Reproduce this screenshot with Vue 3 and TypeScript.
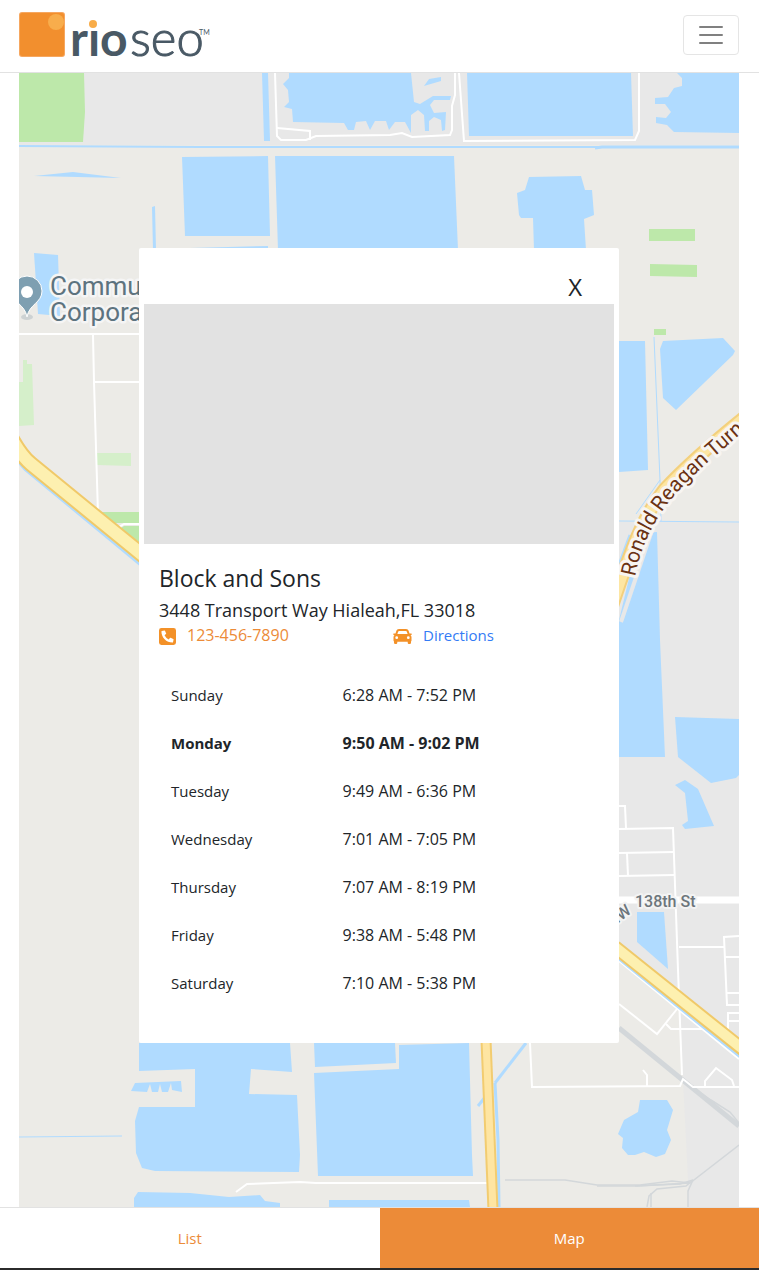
<script setup lang="ts">
import { ref } from 'vue'

interface DayHours {
  day: string
  hours: string
  today?: boolean
}

const view = ref<'list' | 'map'>('map')
const open = ref(true)

const week: DayHours[] = [
  { day: 'Sunday', hours: '6:28 AM - 7:52 PM' },
  { day: 'Monday', hours: '9:50 AM - 9:02 PM', today: true },
  { day: 'Tuesday', hours: '9:49 AM - 6:36 PM' },
  { day: 'Wednesday', hours: '7:01 AM - 7:05 PM' },
  { day: 'Thursday', hours: '7:07 AM - 8:19 PM' },
  { day: 'Friday', hours: '9:38 AM - 5:48 PM' },
  { day: 'Saturday', hours: '7:10 AM - 5:38 PM' },
]

const parks: string[] = [
  '19,73 84,73 85,112 83,142 19,142',
  '649,229 695,229 695,241 649,241',
  '650,264 697,265 697,277 650,276',
  '654,329 666,329 666,335 654,335',
  '98,512 139,512 139,523 104,523',
  '118,530 124,526 139,526 139,550',
]

const lawns: string[] = [
  '19,382 23,382 23,360 27,360 27,364 32,364 34,425 19,426',
  '97,453 131,453 131,466 97,465',
]

const lakes: string[] = [
  '262,73 268,73 270,141 264,141',
  '289,73 411,73 414,102 420,104 433,96 451,96 450,100 434,100 430,105 434,113 446,112 445,130 442,131 441,120 434,117 429,121 429,131 425,131 424,115 418,110 411,115 411,133 405,122 395,122 389,130 386,121 375,121 370,130 366,121 356,122 354,130 348,130 344,123 293,122 292,109 284,107 289,102 288,90 283,84 289,78',
  '424,86 429,79 441,77 441,81',
  '467,73 631,73 633,136 469,136',
  '677,73 739,73 739,133 674,132 667,125 656,123 656,117 666,118 671,112 665,104 655,104 655,98 668,97 674,88 682,86 682,78',
  '182,157 268,156 270,236 185,236',
  '275,156 454,156 458,250 278,250',
  '34,176 73,172 121,178',
  '152,207 155,206 156,250 153,250',
  '34,253 58,255 60,316 38,314',
  '529,177 581,176 585,190 592,190 594,215 584,219 586,250 534,250 533,218 521,218 519,215 517,193 525,190',
  '190,248 268,246 268,250 190,250',
  '619,341 645,341 648,470 619,472',
  '663,341 723,338 735,351 733,355 676,410 663,398 660,349',
  '640,533 657,532 660,640 665,757 619,757 619,620',
  '675,717 739,719 739,775 736,778 711,783 678,757',
  '675,785 685,780 698,789 714,826 685,829 682,825 688,821 685,793',
  '637,912 664,912 668,969 637,942',
  '139,1043 290,1043 292,1072 251,1069 249,1094 297,1095 300,1155 299,1172 155,1171 142,1168 136,1153 135,1121 139,1107 195,1107 195,1069 139,1071',
  '135,1083 181,1081 182,1092 172,1090 171,1083 168,1092 162,1092 160,1084 158,1092 152,1092 150,1084 147,1092 131,1091',
  '314,1043 395,1043 396,1063 315,1067',
  '399,1045 469,1043 472,1155 473,1176 318,1176 314,1073 399,1069',
  '134,1198 138,1192 190,1193 229,1197 260,1195 265,1201 280,1203 280,1207 134,1207',
  '329,1200 469,1200 470,1207 329,1207',
  '640,1100 667,1100 673,1110 667,1130 671,1140 665,1154 656,1157 644,1152 635,1155 628,1155 622,1148 623,1138 618,1134 624,1120 638,1112',
]

const canals: string[] = [
  'M495 1083 L498 1140 L499 1207',
  'M526 1043 L495 1083',
  'M478 1106 L486 1096',
]

const streets: string[] = [
  'M275 73 L277 136 L281 140 H306 L316 136 L390 135 L402 133 L412 137 L450 135 L452 130 L452 106 L455 95 V73',
  'M277 128 L310 131 V140',
  'M459 73 L464 141 L635 140 L639 131 V73',
  'M19 334 H139',
  'M93 335 L94 382 L98 514',
  'M94 382 H139',
  'M104 517 L119 527 L124 524 H139',
  'M47 470 L56 476 L62 484',
  'M619 806 H625 L626 828',
  'M619 829 L673 828 L678 970 L682 1075',
  'M619 853 L674 852',
  'M627 853 L628 876',
  'M619 876 L675 875',
  'M679 947 H724',
  'M739 936 L724 937 L727 1005 H739',
  'M725 957 H739',
  'M727 993 H739',
  'M739 1013 H728 V1030',
  'M728 1021 H739',
  'M619 1004 L657 1034 L677 1009',
  'M666 1024 L671 1029 H703',
  'M619 961 L739 1059',
  'M530 1043 L532 1087 L680 1086 L683 1079 L693 1087 H739',
  'M643 1070 L647 1075 V1086',
  'M705 1086 V1081 L716 1068 L732 1080 L734 1086',
  'M236 1192 L247 1184 L300 1182 L316 1183 H487',
]

const rails: string[] = [
  'M505 1180 H565 L597 1185 H640 L672 1181 L690 1183 L739 1145',
  'M597 1186 H636 L690 1183',
  'M635 1186 L680 1184 L693 1180',
  'M647 1207 L649 1196 L657 1189 L686 1186 L693 1180 L688 1191 V1207',
  'M651 1207 V1193',
  'M683 1081 L711 1100 L730 1112 L739 1123',
]
</script>

<template>
  <div class="page">
    <header class="topbar">
      <a class="brand" href="#" aria-label="Rio SEO home">
        <svg class="logo" viewBox="0 0 200 64" role="img" aria-label="rio seo">
          <rect x="0" y="9" width="46" height="45" rx="3" fill="#f6a760" />
          <rect x="1" y="10" width="44" height="43" rx="2" fill="#f28f2e" />
          <circle cx="37" cy="19" r="8" fill="#f8ad4c" />
          <text class="logo-bold" x="51" y="53">rio</text>
          <circle cx="75" cy="21" r="5" fill="#fff" />
          <circle cx="74" cy="21" r="4" fill="#f8ac48" />
          <text class="logo-light" x="111" y="53">seo</text>
          <text class="logo-mark" x="180" y="32">TM</text>
        </svg>
      </a>
      <button class="menu" type="button" aria-label="Toggle navigation">
        <svg viewBox="0 0 30 30" aria-hidden="true">
          <path d="M4 7h22M4 15h22M4 23h22" stroke="#808080" stroke-width="2" stroke-linecap="round" />
        </svg>
      </button>
    </header>

    <main class="stage">
      <svg class="map" viewBox="19 73 720 1134" preserveAspectRatio="xMidYMin slice" role="img" aria-label="Map">
        <rect x="19" y="73" width="720" height="1134" fill="#ecebe7" />
        <rect x="19" y="73" width="720" height="72" fill="#e8e8e8" />
        <polygon points="619,522 739,522 739,1207 688,1207 688,1180 683,1080 679,1010 619,961" fill="#e8e8e8" />
        <polygon v-for="p in parks" :key="p" :points="p" fill="#bde8aa" />
        <polygon v-for="p in lawns" :key="p" :points="p" fill="#d5efca" />
        <g fill="#b0dbff">
          <polygon v-for="p in lakes" :key="p" :points="p" />
        </g>
        <g fill="none" stroke="#b0dbff">
          <path d="M19 146 L200 147 H600" stroke-width="2" />
          <path d="M595 148 L602 147 H739" stroke-width="3" />
          <path d="M19 1137 L122 1136" stroke-width="1" />
          <path d="M654 337 L660 480 L636 514 M619 521 L739 522 M660 480 L661 521" stroke-width="1" />
          <path d="M630 535 L619 565" stroke-width="3" />
          <path v-for="c in canals" :key="c" :d="c" stroke-width="3" />
        </g>
        <g fill="none" stroke="#d3d7da">
          <path d="M619 1028 L739 1126" stroke-width="5" />
          <path v-for="r in rails" :key="r" :d="r" stroke-width="1.5" />
        </g>
        <g fill="none" stroke="#fff" stroke-width="2">
          <path d="M619 900 H739" stroke-width="7" />
          <path v-for="s in streets" :key="s" :d="s" />
        </g>
        <g fill="none">
          <path d="M8 434 Q20 455 30 465 L145 560" stroke="#b0dbff" stroke-width="16" />
          <path d="M8 432 Q20 455 31 464 L145 557" stroke="#f0c969" stroke-width="16" />
          <path d="M8 432 Q20 455 31 464 L145 557" stroke="#fdf0b0" stroke-width="12" />
          <path d="M615 948 L745 1053" stroke="#b0dbff" stroke-width="15" />
          <path d="M615 947 L745 1051" stroke="#f0c969" stroke-width="14" />
          <path d="M615 947 L745 1051" stroke="#fdf0b0" stroke-width="10" />
          <path d="M486 1040 L493 1210" stroke="#f2cc70" stroke-width="11" />
          <path d="M486 1040 L493 1210" stroke="#fee5a2" stroke-width="7" />
          <path d="M652 530 L621 622" stroke="#e8e8e8" stroke-width="4" />
          <path d="M612 606 C628 560 640 520 664 490 Q694 458 745 417" stroke="#f3d07d" stroke-width="14" />
          <path d="M612 606 C628 560 640 520 664 490 Q694 458 745 417" stroke="#fde6a3" stroke-width="10" />
        </g>
        <ellipse cx="27" cy="317" rx="6" ry="3" fill="#b9c2c7" opacity="0.6" />
        <path d="M27 317 C25 304 12 303 12 291 A15 15 0 0 1 42 291 C42 303 29 304 27 317Z" fill="#7e9fb1" stroke="#fff" />
        <circle cx="27" cy="292" r="6" fill="#fff" />
        <text class="place" x="50" y="295">Commu</text>
        <text class="place" x="50" y="321">Corpora</text>
        <path id="turnpike" d="M635 577 C640 550 650 529 664 509 C676 492 695 474 707 463 L770 409" fill="none" />
        <text class="turnpike"><textPath href="#turnpike">Ronald Reagan Turn</textPath></text>
        <text class="street" x="635" y="907">138th St</text>
        <path id="street-bend" d="M612 928 L642 905" fill="none" />
        <text class="street"><textPath href="#street-bend">NW</textPath></text>
      </svg>

      <section v-if="open" class="card" aria-labelledby="store-name">
        <div class="card-head">
          <button class="close" type="button" aria-label="Close" @click="open = false">X</button>
        </div>
        <div class="photo"></div>
        <div class="details">
          <h2 id="store-name">Block and Sons</h2>
          <p class="address">3448 Transport Way Hialeah,FL 33018</p>
          <div class="contact">
            <a class="phone" href="tel:1234567890">
              <svg class="phone-icon" viewBox="0 32 448 448" aria-hidden="true">
                <path fill="#f39128" d="M384 32H64A64 64 0 0 0 0 96v320a64 64 0 0 0 64 64h320a64 64 0 0 0 64-64V96a64 64 0 0 0-64-64zm-.39 307.37l-15 65A15 15 0 0 1 354 416C194 416 64 286.29 64 126a15.7 15.7 0 0 1 11.63-14.61l65-15A18.23 18.23 0 0 1 144 96a16.27 16.27 0 0 1 13.79 9.09l30 70A17.9 17.9 0 0 1 189 181a17 17 0 0 1-5.5 11.61l-37.89 31a231.91 231.91 0 0 0 110.78 110.78l31-37.89A17 17 0 0 1 299 291a17.85 17.85 0 0 1 5.91 1.21l70 30A16.25 16.25 0 0 1 384 336a17.41 17.41 0 0 1-.39 3.37z" />
              </svg>
              <span>123-456-7890</span>
            </a>
            <a class="directions" href="#directions">
              <svg class="car-icon" viewBox="0 0 19 15" aria-hidden="true">
                <path fill="#f39128" fill-rule="evenodd" d="M6 0h7c1.400 0 2.300.8 2.700 2l.8 2.500h1.700q.8 0 .5.8l-.2.600h-1c.7.6 1 1.300 1 2.300v3.300q0 .6-.5.9v1.400q0 1.200-1.200 1.200h-.9q-1.200 0-1.200-1.200v-1h-10.400v1q0 1.200-1.200 1.200h-.9q-1.200 0-1.200-1.200v-1.400q-.5-.3-.5-.9v-3.300c0-1 .3-1.700 1-2.300h-1l-.2-.600q-.3-.8.5-.8h1.700l.8-2.500c.4-1.200 1.300-2 2.700-2zM6.200 2q-.8 0-1.100.8l-.7 2.100h10.200l-.7-2.100q-.3-.8-1.100-.8zM3.700 7.300a1.400 1.400 0 1 0 0 2.800a1.400 1.400 0 1 0 0-2.800zM15.300 7.300a1.400 1.400 0 1 0 0 2.800a1.400 1.400 0 1 0 0-2.800z" />
              </svg>
              <span>Directions</span>
            </a>
          </div>
          <table class="hours" aria-label="Opening hours">
            <tbody>
              <tr v-for="d in week" :key="d.day" :class="{ today: d.today }">
                <th scope="row">{{ d.day }}</th>
                <td>{{ d.hours }}</td>
              </tr>
            </tbody>
          </table>
        </div>
      </section>
    </main>

    <nav class="switch" aria-label="View">
      <button type="button" :class="{ active: view === 'list' }" @click="view = 'list'">List</button>
      <button type="button" :class="{ active: view === 'map' }" @click="view = 'map'">Map</button>
    </nav>
  </div>
</template>

<style>
body {
  background: #fff;
}
</style>

<style scoped>
* {
  box-sizing: border-box;
}
.page {
  min-height: 100vh;
  display: flex;
  flex-direction: column;
  font-family: "Segoe UI", "Open Sans", "Noto Sans", sans-serif;
  font-size: 15px;
  line-height: 24px;
  color: #212529;
}
button {
  font: inherit;
  color: inherit;
  cursor: pointer;
}
.topbar {
  display: flex;
  align-items: center;
  justify-content: space-between;
  height: 73px;
  padding: 0 20px 2px 19px;
  border-bottom: 1px solid #e2e2e2;
}
.brand {
  display: flex;
}
.logo {
  width: 200px;
  height: 64px;
}
.logo text {
  font-family: Lato, sans-serif;
  fill: #495965;
}
.logo .logo-bold {
  font-size: 48px;
  font-weight: 700;
}
.logo .logo-light {
  font-size: 49px;
  font-weight: 300;
  stroke: #495965;
  stroke-width: 1px;
}
.logo .logo-mark {
  font-size: 7px;
}
.menu {
  display: flex;
  align-items: center;
  justify-content: center;
  width: 56px;
  height: 40px;
  padding: 0;
  background: #fff;
  border: 1px solid #e5e5e5;
  border-radius: 4px;
}
.menu svg {
  width: 30px;
  height: 30px;
}
.stage {
  flex: 1;
  display: grid;
  grid-template-rows: 1fr;
  margin: 0 20px 0 19px;
}
.map {
  grid-area: 1 / 1;
  width: 100%;
  height: 100%;
  min-height: 0;
  display: block;
  contain: size;
}
.place {
  font: 26px Roboto, sans-serif;
  fill: #5d737f;
  stroke: #f5f5f5;
  stroke-width: 5px;
  stroke-linejoin: round;
  paint-order: stroke;
}
.turnpike {
  font: 21px Roboto, sans-serif;
  fill: #6b3212;
  stroke: #f7f5f2;
  stroke-width: 6px;
  stroke-linejoin: round;
  paint-order: stroke;
}
.street {
  font: 500 16px Roboto, sans-serif;
  fill: #6d767c;
  stroke: #f3f3f3;
  stroke-width: 4px;
  stroke-linejoin: round;
  paint-order: stroke;
}
.card {
  grid-area: 1 / 1;
  align-self: start;
  justify-self: center;
  position: relative;
  width: 100%;
  max-width: 480px;
  margin: 175px 0 24px;
  padding-bottom: 36px;
  background: #fff;
  border-radius: 2px;
}
.card-head {
  display: flex;
  justify-content: flex-end;
  padding: 22px 37px 0;
  height: 56px;
}
.close {
  height: 34px;
  padding: 0;
  border: 0;
  background: none;
  font-size: 24px;
  line-height: 34px;
}
.photo {
  height: 240px;
  margin: 0 5px;
  background: #e2e2e2;
}
.details {
  padding: 20px 20px 0;
}
h2 {
  margin: 0 0 4px;
  font-size: 23px;
  font-weight: 400;
  line-height: 29px;
}
.address {
  margin: 0;
  font-size: 18px;
  line-height: 27px;
}
.contact {
  display: grid;
  grid-template-columns: 1fr 1fr;
  column-gap: 28px;
  margin-bottom: 23px;
}
.contact a {
  display: flex;
  align-items: center;
  text-decoration: none;
}
.contact span {
  padding-bottom: 2px;
  line-height: 22px;
}
.phone {
  font-size: 16px;
  color: #ec8b38;
}
.directions {
  color: #337bf5;
}
.phone-icon {
  width: 17px;
  height: 17px;
  margin-right: 11px;
}
.car-icon {
  width: 19px;
  height: 15px;
  margin-right: 11px;
}
.hours {
  width: 100%;
  table-layout: fixed;
  border-collapse: collapse;
}
.hours th,
.hours td {
  height: 48px;
  padding: 12px;
  text-align: left;
  font-weight: 400;
}
.hours td {
  font-size: 16px;
}
.hours th {
  width: 39%;
}
.hours .today th,
.hours .today td {
  font-weight: 700;
}
.switch {
  display: grid;
  grid-template-columns: 1fr 1fr;
  border-top: 1px solid #e2e2e2;
  border-bottom: 2px solid #2b2b2b;
}
.switch button {
  height: 60px;
  padding: 0;
  border: 0;
  background: #fff;
  color: #ec8b38;
}
.switch button.active {
  background: #ec8b38;
  color: #fff;
}
</style>
